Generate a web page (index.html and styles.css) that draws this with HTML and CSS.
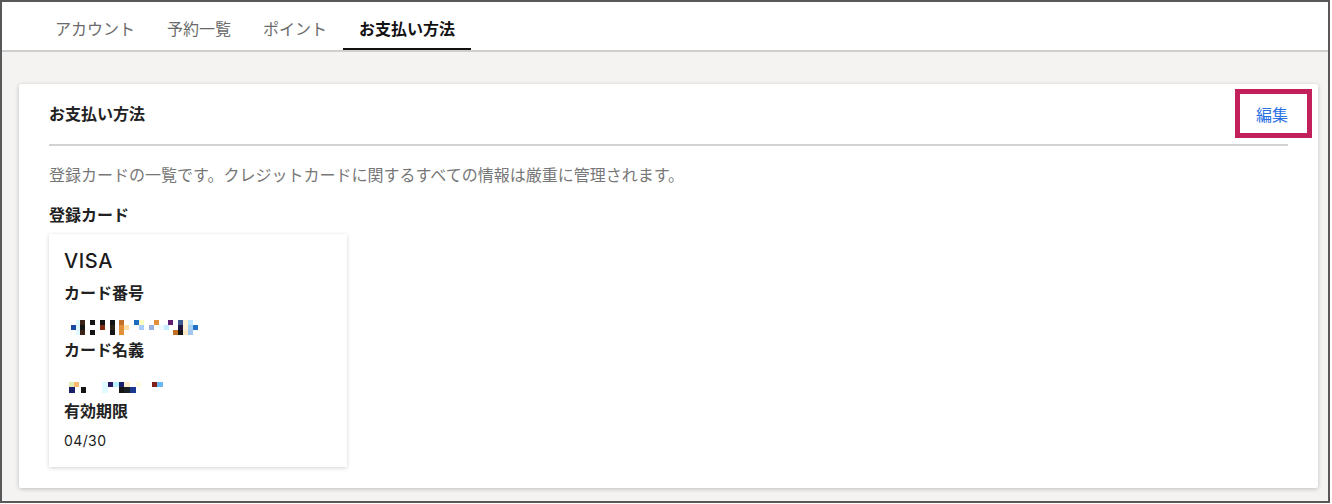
FILE: index.html
```html
<!DOCTYPE html>
<html lang="ja">
<head>
    <meta charset="UTF-8">
    <meta name="viewport" content="width=device-width, initial-scale=1.0">
    <title>お支払い方法</title>
    <link rel="stylesheet" href="styles.css">
</head>
<body>
    <div class="frame">
        <nav class="tabs">
            <a class="tab">アカウント</a>
            <a class="tab">予約一覧</a>
            <a class="tab">ポイント</a>
            <a class="tab active">お支払い方法</a>
        </nav>
        <main class="main">
            <section class="panel">
                <div class="panel-head">
                    <h2>お支払い方法</h2>
                    <a class="edit-link">編集</a>
                </div>
                <div class="divider"></div>
                <p class="desc">登録カードの一覧です。クレジットカードに関するすべての情報は厳重に管理されます。</p>
                <h3>登録カード</h3>
                <div class="card">
                    <div class="brand">VISA</div>
                    <div class="label">カード番号</div>
                    <!-- masked card number -->
                    <svg class="mosaic m1" width="128" height="15" viewBox="0 0 128 15" shape-rendering="crispEdges">
                        <rect x="5" y="0" width="4" height="5" fill="#e0f8ff"/>
                        <rect x="9" y="0" width="5" height="5" fill="#3a2418"/>
                        <rect x="19" y="0" width="5" height="5" fill="#141414"/>
                        <rect x="29" y="0" width="5" height="5" fill="#141414"/>
                        <rect x="39" y="0" width="5" height="5" fill="#141414"/>
                        <rect x="48" y="0" width="5" height="5" fill="#c07028"/>
                        <rect x="63" y="0" width="5" height="5" fill="#1a6cc0"/>
                        <rect x="68" y="0" width="5" height="5" fill="#ffffc0"/>
                        <rect x="83" y="0" width="5" height="5" fill="#e09038"/>
                        <rect x="97" y="0" width="5" height="5" fill="#601c70"/>
                        <rect x="107" y="0" width="5" height="5" fill="#3a5a90"/>
                        <rect x="112" y="0" width="5" height="5" fill="#fff4d8"/>
                        <rect x="117" y="0" width="5" height="5" fill="#b8e4ff"/>

                        <rect x="0" y="5" width="5" height="5" fill="#1848a0"/>
                        <rect x="5" y="5" width="4" height="5" fill="#e0f8ff"/>
                        <rect x="9" y="5" width="5" height="5" fill="#141414"/>
                        <rect x="29" y="5" width="5" height="5" fill="#802a10"/>
                        <rect x="39" y="5" width="5" height="5" fill="#2a2418"/>
                        <rect x="48" y="5" width="5" height="5" fill="#e09038"/>
                        <rect x="53" y="5" width="5" height="5" fill="#ffe0a8"/>
                        <rect x="68" y="5" width="5" height="5" fill="#a8ccff"/>
                        <rect x="78" y="5" width="5" height="5" fill="#98b0e0"/>
                        <rect x="88" y="5" width="5" height="5" fill="#f0faff"/>
                        <rect x="93" y="5" width="5" height="5" fill="#c8ecff"/>
                        <rect x="107" y="5" width="5" height="5" fill="#201840"/>
                        <rect x="112" y="5" width="5" height="5" fill="#fff4d8"/>
                        <rect x="117" y="5" width="5" height="5" fill="#a8d0f0"/>
                        <rect x="122" y="5" width="5" height="5" fill="#2070c8"/>

                        <rect x="5" y="10" width="4" height="5" fill="#e0f8ff"/>
                        <rect x="9" y="10" width="5" height="5" fill="#3a2418"/>
                        <rect x="19" y="10" width="5" height="5" fill="#141414"/>
                        <rect x="39" y="10" width="5" height="5" fill="#141414"/>
                        <rect x="48" y="10" width="5" height="5" fill="#e09038"/>
                        <rect x="102" y="10" width="5" height="5" fill="#c07020"/>
                        <rect x="107" y="10" width="5" height="5" fill="#141414"/>
                        <rect x="112" y="10" width="5" height="5" fill="#ffe8c8"/>
                        <rect x="117" y="10" width="5" height="5" fill="#a0c8f0"/>
                    </svg>
                    <div class="label">カード名義</div>
                    <!-- masked holder name -->
                    <svg class="mosaic m2" width="95" height="12" viewBox="0 0 95 12" shape-rendering="crispEdges">
                        <rect x="0" y="0" width="5" height="5" fill="#e0ecb0"/>
                        <rect x="5" y="0" width="5" height="5" fill="#ffb870"/>
                        <rect x="33" y="0" width="6" height="5" fill="#e0faff"/>
                        <rect x="39" y="0" width="5" height="5" fill="#281860"/>
                        <rect x="44" y="0" width="6" height="5" fill="#b8f0ff"/>
                        <rect x="50" y="0" width="5" height="5" fill="#182070"/>
                        <rect x="55" y="0" width="6" height="5" fill="#ffecc8"/>
                        <rect x="67" y="0" width="5" height="5" fill="#fffce0"/>
                        <rect x="83" y="0" width="5" height="5" fill="#802018"/>
                        <rect x="88" y="0" width="6" height="5" fill="#68b8f8"/>

                        <rect x="0" y="5" width="6" height="6" fill="#182068"/>
                        <rect x="12" y="5" width="5" height="6" fill="#141414"/>
                        <rect x="33" y="5" width="6" height="6" fill="#e0faff"/>
                        <rect x="50" y="5" width="5" height="6" fill="#141414"/>
                        <rect x="55" y="5" width="6" height="6" fill="#182028"/>
                        <rect x="61" y="5" width="6" height="6" fill="#1a3890"/>
                    </svg>
                    <div class="label">有効期限</div>
                    <div class="expiry">04/30</div>
                </div>
            </section>
        </main>
    </div>
</body>
</html>
```

FILE: styles.css
```css
* {
    box-sizing: border-box;
}

body {
    margin: 0;
    font-family: "Noto Sans CJK JP", "Noto Sans", sans-serif;
    color: #222;
    background: #fff;
}

.frame {
    width: 1330px;
    height: 503px;
    border: 2px solid #585858;
    overflow: hidden;
    display: flex;
    flex-direction: column;
}

.tabs {
    display: flex;
    background: #fff;
    border-bottom: 2px solid #cfcfcf;
    padding-left: 37px;
}

.tab {
    height: 48px;
    padding: 6px 16px 0;
    display: flex;
    align-items: center;
    font-size: 16px;
    color: #6a6a6a;
    border-bottom: 2px solid transparent;
    cursor: pointer;
}

.tab.active {
    color: #111;
    font-weight: bold;
    border-bottom-color: #111;
}

.main {
    flex: 1;
    background: #f4f3f1;
    padding: 32px 10px 13px 17px;
}

.panel {
    background: #fff;
    border-radius: 2px;
    box-shadow: 0 1px 4px rgba(0, 0, 0, 0.22);
    padding: 17px 30px 21px;
}

.panel-head {
    display: flex;
    justify-content: space-between;
    align-items: center;
    height: 24px;
}

.panel-head h2 {
    margin: 0;
    font-size: 16px;
    line-height: 24px;
    font-weight: bold;
}

.edit-link {
    position: relative;
    top: 1px;
    font-size: 16px;
    line-height: 24px;
    color: #2a6fe4;
    cursor: pointer;
}

/* highlight box around the edit link */
.edit-link::after {
    content: "";
    position: absolute;
    top: -13px;
    bottom: -12px;
    left: -21px;
    right: -24px;
    border: 5px solid #c2205a;
}

.divider {
    margin-top: 19px;
    height: 2px;
    background: #d2d2d2;
}

.desc {
    margin: 16px 0 0;
    font-size: 16px;
    line-height: 24px;
    color: #777;
}

h3 {
    margin: 16px 0 0;
    font-size: 16px;
    line-height: 24px;
    font-weight: bold;
}

.card {
    margin-top: 8px;
    width: 298px;
    padding: 14px 15px 16px;
    background: #fff;
    box-shadow: 0 1px 4px rgba(0, 0, 0, 0.18);
}

.brand {
    font-family: "Inter", "Noto Sans", sans-serif;
    font-size: 20px;
    font-weight: 500;
    line-height: 26px;
    letter-spacing: 0.6px;
    color: #1a1a1a;
}

.label {
    font-size: 16px;
    line-height: 24px;
    font-weight: bold;
}

.brand + .label {
    margin-top: 6px;
}

.mosaic {
    display: block;
}

.m1 {
    margin: 16px 0 2px 7px;
}

.m2 {
    margin: 21px 0 4px 5px;
}

.expiry {
    margin-top: 9px;
    font-family: "Inter", "Noto Sans", sans-serif;
    font-size: 14px;
    line-height: 20px;
    letter-spacing: 0.4px;
    color: #1a1a1a;
}
```
